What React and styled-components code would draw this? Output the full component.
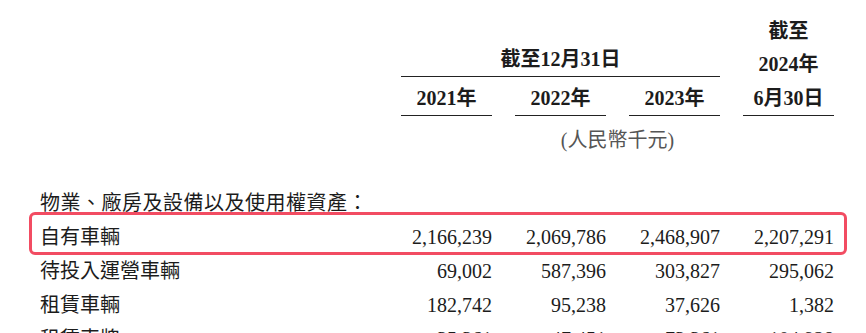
import React from 'react'
import styled, { createGlobalStyle } from 'styled-components'

const GlobalStyle = createGlobalStyle`
  html, body {
    margin: 0;
    padding: 0;
    background: #ffffff;
  }
  body {
    font-family: "Liberation Serif", "Noto Sans CJK TC", serif;
    color: #1c1c1c;
    overflow: hidden;
  }
`

const columns = [
  { year: '2021年' },
  { year: '2022年' },
  { year: '2023年' },
]

const rows = [
  { label: '自有車輛', values: ['2,166,239', '2,069,786', '2,468,907', '2,207,291'], highlight: true },
  { label: '待投入運營車輛', values: ['69,002', '587,396', '303,827', '295,062'] },
  { label: '租賃車輛', values: ['182,742', '95,238', '37,626', '1,382'] },
  { label: '租賃車牌', values: ['35,361', '47,451', '73,361', '104,928'] },
]

const App = () => {
  return (
    <>
      <GlobalStyle />
      <Page>
        <Header>
          <GroupTitle>截至12月31日</GroupTitle>
          {columns.map((col, index) => (
            <YearCell key={index} $col={index + 2}>{col.year}</YearCell>
          ))}
          <StackCell>
            <span>截至</span>
            <span>2024年</span>
            <span>6月30日</span>
          </StackCell>
          <Unit>(人民幣千元)</Unit>
        </Header>
        <SectionTitle>物業、廠房及設備以及使用權資產：</SectionTitle>
        {rows.map((row, index) => (
          <Row key={index} $highlight={row.highlight}>
            <Label>{row.label}</Label>
            {row.values.map((value, i) => (
              <Value key={i}>{value}</Value>
            ))}
          </Row>
        ))}
      </Page>
    </>
  )
}

export default App

const Page = styled.div`
  width: 794px;
  padding: 16px 0 0 40px;
`
const Header = styled.div`
  display: grid;
  grid-template-columns: 1fr repeat(4, 91px);
  grid-template-rows: 61px 39px auto;
  column-gap: 23px;
  font-size: 20px;
`
const GroupTitle = styled.div`
  grid-column: 2 / 5;
  grid-row: 1;
  align-self: end;
  text-align: center;
  line-height: 33px;
  font-weight: 700;
  border-bottom: 1px solid #222;
`
const YearCell = styled.div`
  grid-column: ${(p) => p.$col};
  grid-row: 2;
  align-self: end;
  text-align: center;
  line-height: 33px;
  font-weight: 700;
  border-bottom: 1px solid #222;
`
const StackCell = styled.div`
  grid-column: 5;
  grid-row: 1 / 3;
  display: flex;
  flex-direction: column;
  justify-content: flex-end;
  align-items: center;
  line-height: 33.5px;
  font-weight: 700;
  border-bottom: 1px solid #222;
`
const Unit = styled.div`
  grid-column: 3 / 5;
  grid-row: 3;
  margin-top: 7px;
  text-align: center;
  line-height: 34px;
  color: #555;
`
const SectionTitle = styled.div`
  margin-top: 29px;
  font-size: 20px;
  line-height: 34px;
  color: #1c1c1c;
  letter-spacing: 0.5px;
`
const Row = styled.div`
  position: relative;
  display: grid;
  grid-template-columns: 1fr repeat(4, 91px);
  column-gap: 23px;
  font-size: 20px;
  line-height: 34px;

  ${(p) => p.$highlight && `
    &::after {
      content: '';
      position: absolute;
      top: -8px;
      bottom: -1px;
      left: -11px;
      right: -13px;
      border: 3px solid #f24c62;
      border-radius: 6px;
      pointer-events: none;
    }
  `}
`
const Label = styled.div`
  white-space: nowrap;
`
const Value = styled.div`
  text-align: right;
  white-space: nowrap;
`
